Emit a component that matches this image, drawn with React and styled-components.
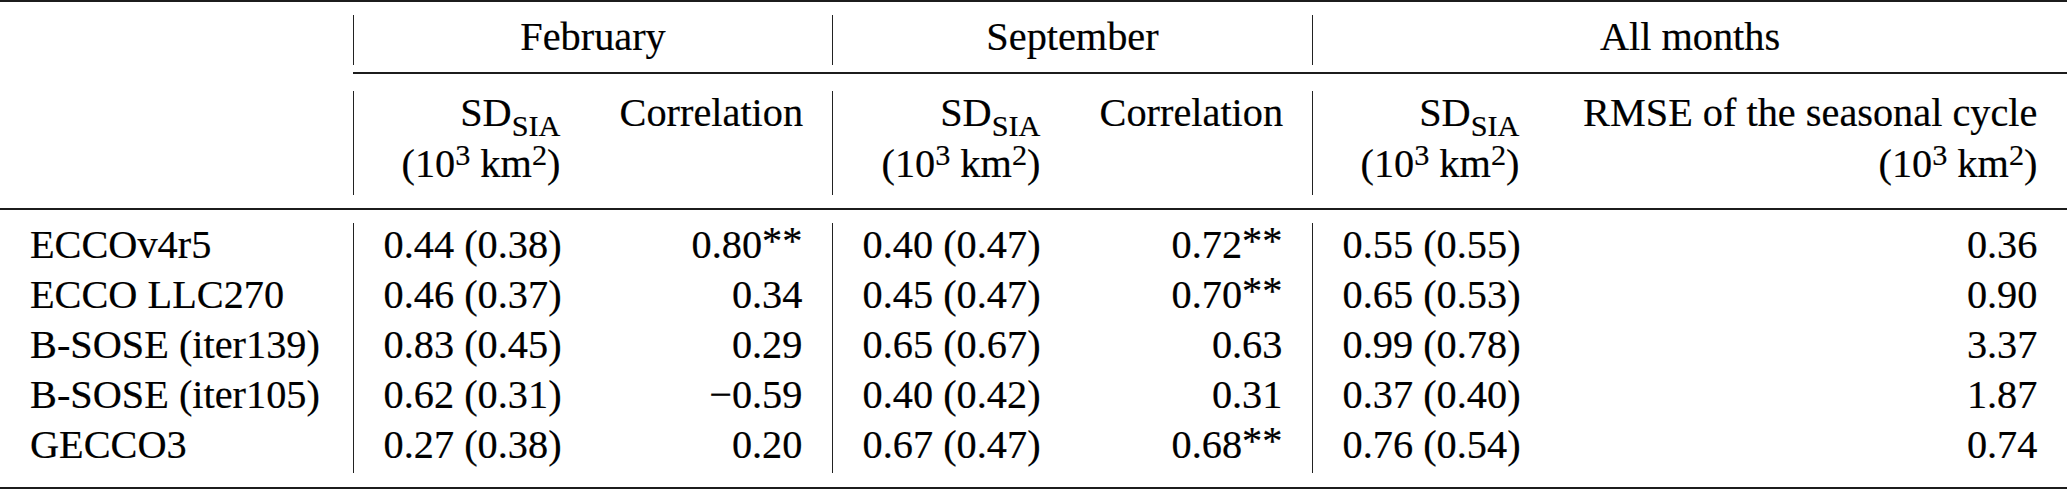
import React from 'react';
import styled, { createGlobalStyle } from 'styled-components';

const Global = createGlobalStyle`
  body {
    margin: 0;
    background: #ffffff;
  }
`;

const Page = styled.div`
  width: 2067px;
  background: #ffffff;
  color: #000000;
  font-family: 'Liberation Serif', 'Times New Roman', serif;
  font-size: 40.3px;
  -webkit-text-stroke: 0.2px #000000;
`;

const Table = styled.div`
  display: grid;
  grid-template-columns: 353px 237px 242px 238px 242px 237px 518px;
`;

const Rule = styled.div`
  grid-column: ${(p) => p.$from || 1} / -1;
  height: ${(p) => p.$weight}px;
  margin: ${(p) => p.$above || 0}px 0 ${(p) => p.$below || 0}px;
  background: #1c1c1c;
`;

const Blank = styled.div``;

const GroupCell = styled.div`
  grid-column: span 2;
  height: 50px;
  line-height: 43px;
  text-align: center;
  border-left: 1.5px solid #222222;
`;

const HeadCell = styled.div`
  height: 104px;
  padding: 0 29.6px;
  text-align: right;
  border-left: ${(p) => (p.$divider ? '1.5px solid #222222' : 'none')};
`;

const HeadLine = styled.div`
  height: 51px;
  line-height: 43px;
  white-space: nowrap;
`;

const Cell = styled.div`
  height: 50px;
  line-height: 43px;
  padding: ${(p) => (p.$label ? '0 0 0 30px' : '0 29.6px')};
  text-align: ${(p) => p.$align || 'left'};
  white-space: nowrap;
  border-left: ${(p) => (p.$divider ? '1.5px solid #222222' : 'none')};
`;

const Sub = styled.span`
  font-size: 0.75em;
  line-height: 0;
  vertical-align: -10px;
`;

const Sup = styled.span`
  font-size: 0.75em;
  line-height: 0;
  vertical-align: 12px;
`;

const Stars = styled.span`
  line-height: 0;
  vertical-align: 4px;
`;

const groups = ['February', 'September', 'All months'];

const rows = [
  ['ECCOv4r5', '0.44 (0.38)', '0.80**', '0.40 (0.47)', '0.72**', '0.55 (0.55)', '0.36'],
  ['ECCO LLC270', '0.46 (0.37)', '0.34', '0.45 (0.47)', '0.70**', '0.65 (0.53)', '0.90'],
  ['B-SOSE (iter139)', '0.83 (0.45)', '0.29', '0.65 (0.67)', '0.63', '0.99 (0.78)', '3.37'],
  ['B-SOSE (iter105)', '0.62 (0.31)', '\u22120.59', '0.40 (0.42)', '0.31', '0.37 (0.40)', '1.87'],
  ['GECCO3', '0.27 (0.38)', '0.20', '0.67 (0.47)', '0.68**', '0.76 (0.54)', '0.74'],
];

const Units = () => (
  <>
    (10<Sup>3</Sup> km<Sup>2</Sup>)
  </>
);

const SdHead = () => (
  <HeadCell $divider>
    <HeadLine>
      SD<Sub>SIA</Sub>
    </HeadLine>
    <HeadLine>
      <Units />
    </HeadLine>
  </HeadCell>
);

const Value = ({ text }) => {
  if (text.endsWith('**')) {
    return (
      <>
        {text.slice(0, -2)}
        <Stars>**</Stars>
      </>
    );
  }
  return text;
};

const App = () => (
  <Page>
    <Global />
    <Table>
      <Rule $weight={2} $below={13} />

      <Blank />
      {groups.map((g) => (
        <GroupCell key={g}>{g}</GroupCell>
      ))}

      <Rule $from={2} $weight={1.5} $above={7} $below={17.5} />

      <Blank />
      <SdHead />
      <HeadCell>
        <HeadLine>Correlation</HeadLine>
      </HeadCell>
      <SdHead />
      <HeadCell>
        <HeadLine>Correlation</HeadLine>
      </HeadCell>
      <SdHead />
      <HeadCell>
        <HeadLine>RMSE of the seasonal cycle</HeadLine>
        <HeadLine>
          <Units />
        </HeadLine>
      </HeadCell>

      <Rule $weight={2} $above={13} $below={13} />

      {rows.map((r) =>
        r.map((v, i) => (
          <Cell
            key={r[0] + i}
            $label={i === 0}
            $divider={i % 2 === 1}
            $align={i > 0 && i % 2 === 0 ? 'right' : 'left'}
          >
            <Value text={v} />
          </Cell>
        ))
      )}

      <Rule $weight={2} $above={13.5} />
    </Table>
  </Page>
);

export default App;
